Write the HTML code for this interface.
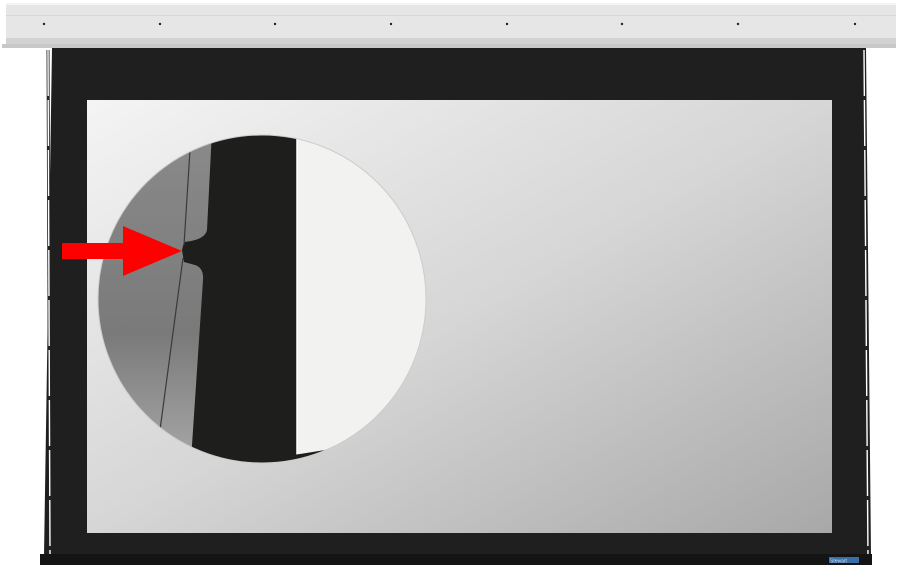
<!DOCTYPE html>
<html><head><style>
html,body{margin:0;padding:0;background:#fff;width:900px;height:569px;overflow:hidden}
</style></head><body>
<svg width="900" height="569" viewBox="0 0 900 569" xmlns="http://www.w3.org/2000/svg">
<defs>
<linearGradient id="scr" x1="0" y1="0" x2="1" y2="1">
<stop offset="0" stop-color="#f4f4f4"/><stop offset="0.5" stop-color="#d6d6d6"/><stop offset="1" stop-color="#a8a8a8"/>
</linearGradient>
<linearGradient id="lg" x1="0" y1="0" x2="0" y2="1">
<stop offset="0" stop-color="#8a8a8a"/><stop offset="0.6" stop-color="#7a7a7a"/><stop offset="1" stop-color="#aaa"/>
</linearGradient>
<clipPath id="c"><circle cx="262" cy="299" r="164"/></clipPath>
</defs>
<rect x="6" y="3" width="890" height="36" fill="#e6e6e6"/>
<rect x="6" y="3" width="890" height="2" fill="#f4f4f4"/>
<rect x="6" y="15" width="890" height="1" fill="#d6d6d6"/>
<rect x="6" y="38" width="890" height="7" fill="#d2d2d2"/>
<rect x="2" y="44" width="894" height="4" fill="#c8c8c8"/>
<g fill="#222">
<circle cx="44" cy="24" r="1.2"/><circle cx="160" cy="24" r="1.2"/><circle cx="275" cy="24" r="1.2"/><circle cx="391" cy="24" r="1.2"/><circle cx="507" cy="24" r="1.2"/><circle cx="622" cy="24" r="1.2"/><circle cx="738" cy="24" r="1.2"/><circle cx="855" cy="24" r="1.2"/>
</g>
<polygon points="52,48 866,48 871,556 44,556" fill="#1f1f1f"/>
<polyline points="48,50 50,556" stroke="#222" stroke-width="3" fill="none"/>
<polyline points="48,50 50,556" stroke="#fff" stroke-width="1.4" fill="none" stroke-dasharray="46 4"/>
<polyline points="864,50 868,556" stroke="#222" stroke-width="3" fill="none"/>
<polyline points="864,50 868,556" stroke="#fff" stroke-width="1.4" fill="none" stroke-dasharray="46 4"/>
<rect x="40" y="554" width="832" height="11" fill="#141414"/>
<rect x="829" y="557" width="30" height="6" fill="#3a6ea8"/>
<text x="830" y="562.5" font-family="Liberation Sans, sans-serif" font-size="5" fill="#cde">Stewart</text>
<rect x="87" y="100" width="745" height="433" fill="url(#scr)"/>
<g clip-path="url(#c)">
<rect x="90" y="130" width="345" height="340" fill="url(#lg)"/>
<rect x="297" y="130" width="140" height="340" fill="#f2f2f0"/>
<path d="M212,130 L297,130 L297,470 L190,470 L192,445 L203,280 Q204,268 195,265 L184,262 L182,250 L184,242 Q205,240 207,230 Z" fill="#1e1e1c"/>
<path d="M190,150 L184,245 M183,258 L160,430" stroke="#3a3a3a" stroke-width="1.2" fill="none"/>
<path d="M297,130 L297,455" stroke="#fff" stroke-width="1.5"/>
<path d="M180,470 L240,462 L300,454 Q360,445 430,430 L430,470 Z" fill="#1e1e1c"/>
</g>
<circle cx="262" cy="299" r="164" fill="none" stroke="#ccc" stroke-width="1"/>
<polygon points="62,243 123,243 123,226 182,251 123,276 123,259 62,259" fill="#ff0000"/>
</svg>
</body></html>
